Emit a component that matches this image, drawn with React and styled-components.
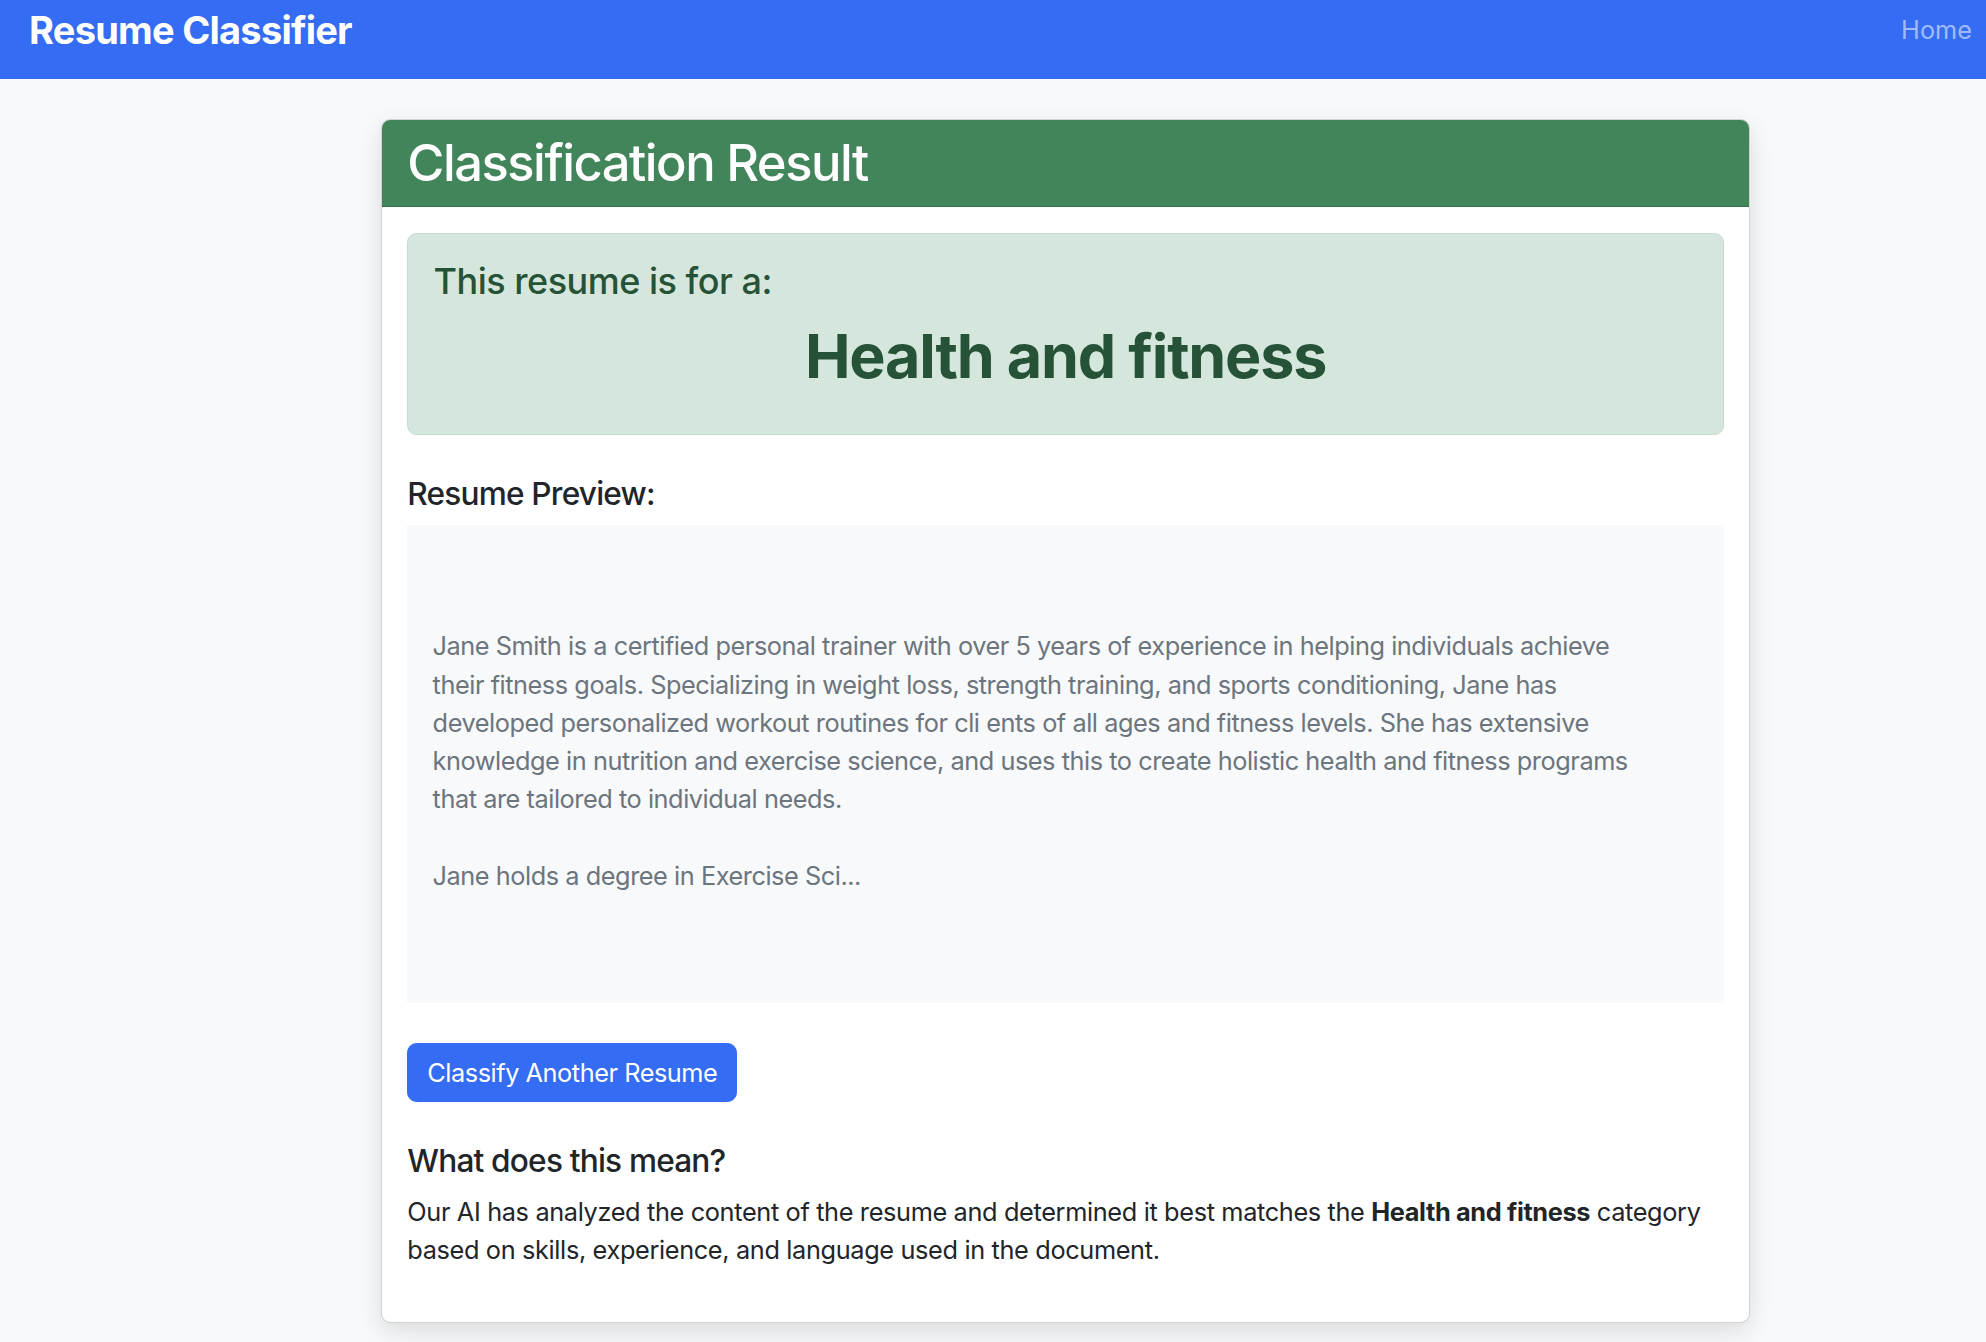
import React from 'react';
import styled, { createGlobalStyle } from 'styled-components';

const GlobalStyle = createGlobalStyle`
    body {
        margin: 0;
        background: #f8f9fa;
        font-family: Inter, "Noto Sans", "Liberation Sans", sans-serif;
        color: #212529;
        font-size: 25.3px;
        line-height: 1.5;
    }
    * { box-sizing: border-box; }
`

const Navbar = styled.nav`
    height: 79px;
    background: #346cf3;
    display: flex;
    justify-content: space-between;
    align-items: flex-start;
    padding: 7px 14px 0 29px;
`

const Brand = styled.div`
    color: #fff;
    font-size: 38px;
    font-weight: 700;
    line-height: 46px;
    letter-spacing: -0.75px;
`

const NavLink = styled.a`
    color: rgba(255, 255, 255, 0.55);
    font-size: 25.3px;
    line-height: 46px;
    text-decoration: none;
`

const Main = styled.main`
    padding: 40px 236px 40px 381px;
`

const Card = styled.section`
    background: #fff;
    border: 1.3px solid rgba(0, 0, 0, 0.175);
    border-radius: 9.5px;
    box-shadow: 0 8px 24px rgba(0, 0, 0, 0.12);
`

const CardHeader = styled.header`
    background: #42855a;
    padding: 12.7px 25.3px;
    border-bottom: 1.3px solid rgba(0, 0, 0, 0.175);
    border-radius: 8.2px 8.2px 0 0;
    h2 {
        margin: 0;
        color: #fff;
        font-size: 50.7px;
        font-weight: 500;
        line-height: 1.2;
        letter-spacing: -1.5px;
    }
`

const CardBody = styled.div`
    padding: 25.3px;
`

const Alert = styled.div`
    background: #d5e7dd;
    border: 1.3px solid #c2dccd;
    border-radius: 9.5px;
    padding: 25.3px;
    margin-bottom: 40px;
    color: #265237;
    h4 {
        margin: 0 0 14px;
        font-size: 36px;
        font-weight: 500;
        line-height: 45.6px;
        letter-spacing: -0.5px;
    }
    h1 {
        margin: 0 0 14px;
        font-size: 61px;
        font-weight: 700;
        line-height: 76px;
        letter-spacing: -1.2px;
        text-align: center;
    }
`

const Heading = styled.h5`
    margin: ${p => p.$top || 0}px 0 12.7px;
    font-size: 31.6px;
    font-weight: 500;
    line-height: 1.2;
    letter-spacing: -0.8px;
`

// the resume text keeps its own line breaks; blank lines around it are padding
const Preview = styled.div`
    background: #f8f9fa;
    color: #6c757d;
    padding: 102px 25.3px 108px;
    font-size: 25.3px;
    line-height: 38.3px;
    letter-spacing: -0.45px;
    white-space: pre-wrap;
`

const Button = styled.button`
    margin-top: 40px;
    background: #346cf3;
    color: #fff;
    border: 1.3px solid #346cf3;
    border-radius: 9.5px;
    padding: 9.5px 19px;
    font-family: inherit;
    font-size: 25.3px;
    line-height: 1.5;
    letter-spacing: -0.45px;
    cursor: pointer;
`

const Text = styled.p`
    margin: 0 0 28px;
    letter-spacing: -0.35px;
`

const resumeText = `Jane Smith is a certified personal trainer with over 5 years of experience in helping individuals achieve
their fitness goals. Specializing in weight loss, strength training, and sports conditioning, Jane has
developed personalized workout routines for cli ents of all ages and fitness levels. She has extensive
knowledge in nutrition and exercise science, and uses this to create holistic health and fitness programs
that are tailored to individual needs.

Jane holds a degree in Exercise Sci...`;

export default function App() {
    const category = 'Health and fitness';
    return (
        <>
            <GlobalStyle />
            <Navbar>
                <Brand>Resume Classifier</Brand>
                <NavLink href="#">Home</NavLink>
            </Navbar>
            <Main>
                <Card>
                    <CardHeader>
                        <h2>Classification Result</h2>
                    </CardHeader>
                    <CardBody>
                        <Alert>
                            <h4>This resume is for a:</h4>
                            <h1>{category}</h1>
                        </Alert>
                        <Heading>Resume Preview:</Heading>
                        <Preview>{resumeText}</Preview>
                        <Button>Classify Another Resume</Button>
                        <Heading $top={40}>What does this mean?</Heading>
                        <Text>
                            <span>Our AI has analyzed the content of the resume and determined it best matches the </span>
                            <b>{category}</b>
                            <span> category</span>
                            <br />
                            <span>based on skills, experience, and language used in the document.</span>
                        </Text>
                    </CardBody>
                </Card>
            </Main>
        </>
    );
}
